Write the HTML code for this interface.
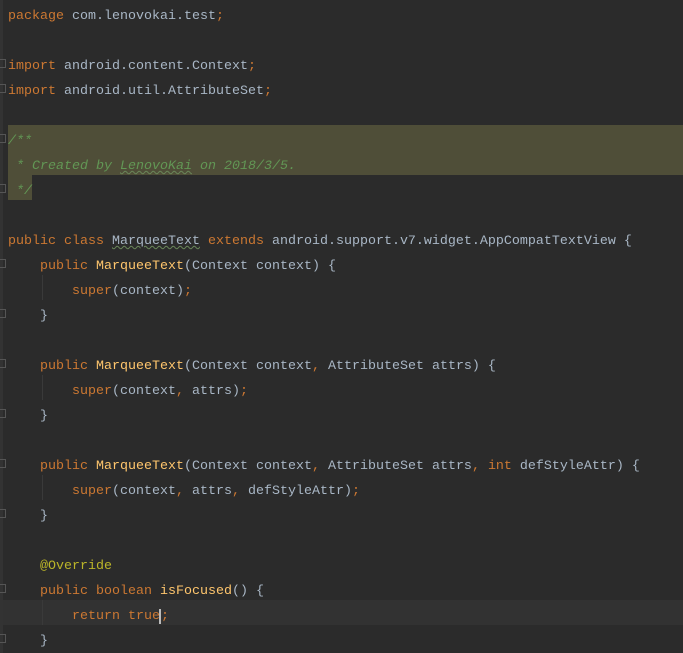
<!DOCTYPE html>
<html><head><style>
html,body{margin:0;padding:0;background:#2b2b2b;width:683px;height:653px;overflow:hidden}
body{position:relative;font-family:"Liberation Mono",monospace;font-size:13.33px;color:#a9b7c6}
.r{position:absolute;left:8px;height:25px;line-height:25px;padding-top:4px;white-space:pre;box-sizing:border-box}
.k{color:#cc7832}.f{color:#ffc66d}.c{color:#629755;font-style:italic}.a{color:#bbb529}
.u{text-decoration:underline wavy #6a8759;text-decoration-thickness:1px}
.hl{position:absolute;background:#4f4e38}
.cur{position:absolute;left:0;top:600px;width:683px;height:25px;background:#323232}
.g{position:absolute;left:0;top:0;width:3px;height:653px;background:#333}
.ig{position:absolute;width:1px;background:#3a3a3a}
.fm{position:absolute;left:0;width:6px;height:9px;border:1px solid #555;border-left:none;box-sizing:border-box}
</style></head><body>
<div class="hl" style="left:8px;top:125px;width:675px;height:50px"></div>
<div class="hl" style="left:8px;top:175px;width:24px;height:25px"></div>
<div class="cur"></div>
<div class="g"></div>
<div class="ig" style="left:42px;top:275px;height:25px"></div>
<div class="ig" style="left:42px;top:375px;height:25px"></div>
<div class="ig" style="left:42px;top:475px;height:25px"></div>
<div class="ig" style="left:42px;top:600px;height:25px"></div>
<div class="fm" style="top:59px"></div><div class="fm" style="top:84px"></div>
<div class="fm" style="top:134px"></div><div class="fm" style="top:184px"></div>
<div class="fm" style="top:259px"></div><div class="fm" style="top:309px"></div>
<div class="fm" style="top:359px"></div><div class="fm" style="top:409px"></div>
<div class="fm" style="top:459px"></div><div class="fm" style="top:509px"></div>
<div class="fm" style="top:584px"></div><div class="fm" style="top:634px"></div>
<div class="r" style="top:0"><span class="k">package</span> com.lenovokai.test<span class="k">;</span></div>
<div class="r" style="top:50px"><span class="k">import</span> android.content.Context<span class="k">;</span></div>
<div class="r" style="top:75px"><span class="k">import</span> android.util.AttributeSet<span class="k">;</span></div>
<div class="r c" style="top:125px">/**</div>
<div class="r c" style="top:150px"> * Created by <span class="u">LenovoKai</span> on 2018/3/5.</div>
<div class="r c" style="top:175px"> */</div>
<div class="r" style="top:225px"><span class="k">public class</span> <span class="u">MarqueeText</span> <span class="k">extends</span> android.support.v7.widget.AppCompatTextView {</div>
<div class="r" style="top:250px">    <span class="k">public</span> <span class="f">MarqueeText</span>(Context context) {</div>
<div class="r" style="top:275px">        <span class="k">super</span>(context)<span class="k">;</span></div>
<div class="r" style="top:300px">    }</div>
<div class="r" style="top:350px">    <span class="k">public</span> <span class="f">MarqueeText</span>(Context context<span class="k">,</span> AttributeSet attrs) {</div>
<div class="r" style="top:375px">        <span class="k">super</span>(context<span class="k">,</span> attrs)<span class="k">;</span></div>
<div class="r" style="top:400px">    }</div>
<div class="r" style="top:450px">    <span class="k">public</span> <span class="f">MarqueeText</span>(Context context<span class="k">,</span> AttributeSet attrs<span class="k">,</span> <span class="k">int</span> defStyleAttr) {</div>
<div class="r" style="top:475px">        <span class="k">super</span>(context<span class="k">,</span> attrs<span class="k">,</span> defStyleAttr)<span class="k">;</span></div>
<div class="r" style="top:500px">    }</div>
<div class="r" style="top:550px">    <span class="a">@Override</span></div>
<div class="r" style="top:575px">    <span class="k">public boolean</span> <span class="f">isFocused</span>() {</div>
<div class="r" style="top:600px">        <span class="k">return true</span><span style="border-left:2px solid #bbb;margin-left:-1px" class="k">;</span></div>
<div class="r" style="top:625px">    }</div>
</body></html>
